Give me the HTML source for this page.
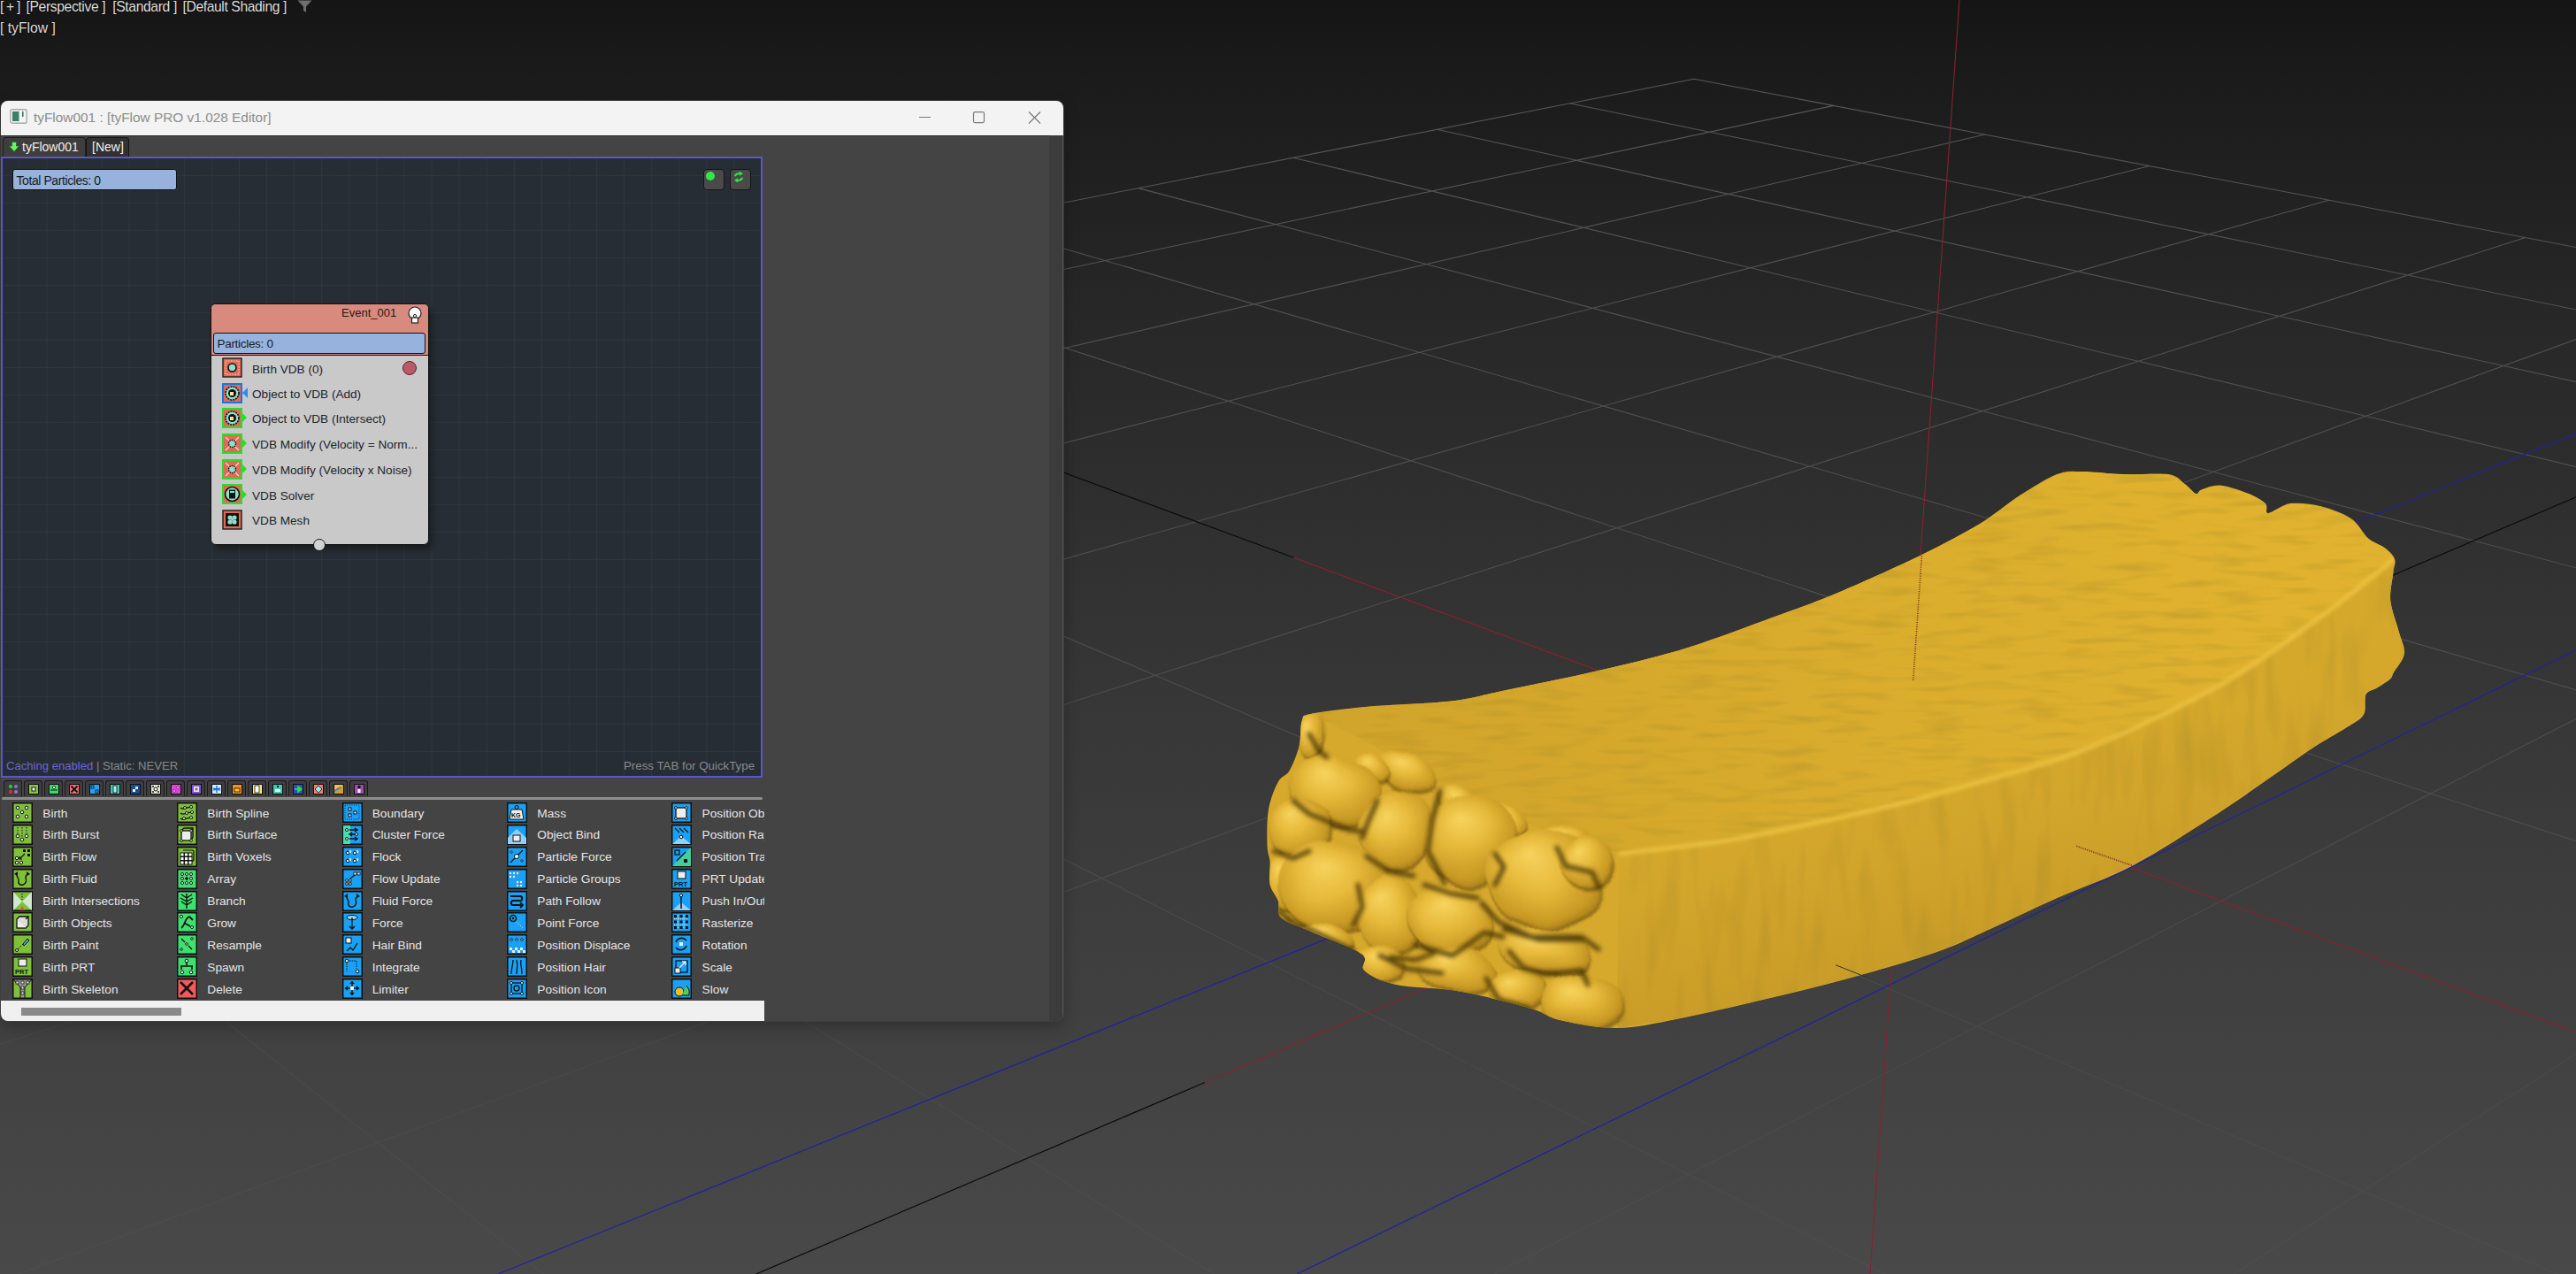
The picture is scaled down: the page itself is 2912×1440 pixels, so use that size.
<!DOCTYPE html><html><head><meta charset="utf-8"><style>
html,body{margin:0;padding:0;width:2912px;height:1440px;overflow:hidden;background:#222;font-family:"Liberation Sans", sans-serif;}
.abs{position:absolute}
.vl{position:absolute;left:0;color:#dcdcdc;font-size:15.7px;white-space:pre;line-height:1;text-shadow:0 0 2px #000}
.win{position:absolute;left:1px;top:114px;width:1201px;height:1040px;background:#444;border-radius:8px;overflow:hidden;box-shadow:0 0 0 1px rgba(70,70,70,0.6), 0 6px 18px rgba(0,0,0,0.28)}
.title{position:absolute;left:0;top:0;width:1201px;height:39px;background:#f3f3f3}
.ttext{position:absolute;left:37px;top:11px;font-size:15.4px;color:#8d8d8d;white-space:pre;line-height:1}
.tabrow{position:absolute;left:0;top:39px;width:1185px;height:25px;background:#444;border-top:1.5px solid #262626;box-sizing:border-box}
.tab{position:absolute;top:1px;height:23px;background:#3e3e3e;border:1px solid #1c1c1c;border-bottom:none;border-radius:4px 4px 0 0;box-sizing:border-box;color:#f2efe6;font-size:14px;line-height:20px;white-space:pre}
.canvas{position:absolute;left:0px;top:63px;width:861px;height:702px;box-sizing:border-box;border:2.5px solid #5b56c9;background-color:#272d34;
background-image:linear-gradient(90deg, rgba(55,78,82,0.3) 1px, transparent 1px),linear-gradient(0deg, rgba(55,78,82,0.3) 1px, transparent 1px);
background-size:31.08px 31px;background-position:18.4px 19.9px}
.pbar{position:absolute;background:#97b3dd;border:1.5px solid #0e1116;border-radius:3px;box-sizing:border-box;color:#151a24;white-space:pre;line-height:1}
.node{position:absolute}
.row{position:absolute;left:0;height:28px;font-size:13.5px;color:#20242a;white-space:pre;line-height:1}
.ops{position:absolute;left:0;top:790px;width:863px}
.op{position:absolute;font-size:13.7px;color:#e6e6e6;white-space:pre;line-height:1}
.ico{position:absolute;width:22px;height:22px}

</style></head><body>
<svg width="2912" height="1440" viewBox="0 0 2912 1440" style="position:absolute;left:0;top:0"><defs><linearGradient id="bg" x1="0" y1="0" x2="0" y2="1"><stop offset="0" stop-color="#151515"/><stop offset="0.0625" stop-color="#1b1b1b"/><stop offset="0.24" stop-color="#272727"/><stop offset="0.576" stop-color="#383838"/><stop offset="0.833" stop-color="#424242"/><stop offset="1" stop-color="#494949"/></linearGradient><linearGradient id="gl" gradientUnits="userSpaceOnUse" x1="0" y1="80" x2="0" y2="1440"><stop offset="0" stop-color="#585858"/><stop offset="0.2" stop-color="#505050"/><stop offset="0.55" stop-color="#4d4d4d"/><stop offset="0.83" stop-color="#484848"/><stop offset="1" stop-color="#4d4d4d"/></linearGradient></defs><rect width="2912" height="1440" fill="url(#bg)"/><path d="M1915.0 89.3L-1769.2 812.7M1915.0 89.3L6515.2 967.1M2072.9 119.4L-1747.5 932.1M1774.8 116.8L6572.4 1100.6M2244.0 152.0L-1722.0 1072.5M1624.3 146.3L6639.6 1257.6M2429.9 187.5L-1691.6 1239.9M1462.0 178.2L6720.0 1445.1M2632.7 226.2L-1654.6 1443.0M1286.7 212.6L6817.5 1672.8M2854.8 268.6L-1608.9 1694.5M1096.6 250.0L6938.6 1955.3M3099.1 315.2L-1550.7 2014.3M889.9 290.6L7092.7 2315.1M3668.9 424.0L-1369.6 3010.5M416.8 383.5L7575.1 3441.0M4004.0 487.9L-1217.0 3849.8M144.5 436.9L7984.0 4395.5M4380.9 559.8L-974.0 5185.8M-156.9 496.1L8639.8 5926.3M4808.0 641.3L-526.9 7645.0M-492.0 561.9L9862.6 8780.6M5295.9 734.5L568.7 13670.1M-867.1 635.6L12948.1 15982.5M5858.8 841.9L7442.0 51469.3M-1289.6 718.5L35746.5 69197.7M6515.2 967.1L-7829.6 -32516.0M-1769.2 812.7L-7829.6 -32516.0" stroke="url(#gl)" stroke-width="1.1" fill="none"/><path d="M664.2 334.9L1462.5 630.3" stroke="#0a0a0a" stroke-width="1.2"/><path d="M1462.5 630.3L7295.7 2788.9" stroke="#8a2030" stroke-width="1.2"/><path d="M3369.0 366.7L2000.0 951.2" stroke="#0a0a0a" stroke-width="1.2"/><path d="M2000.0 951.2L1362.0 1223.5" stroke="#8a2030" stroke-width="1.2"/><path d="M1362.0 1223.5L-1474.4 2434.3" stroke="#0a0a0a" stroke-width="1.2"/><path d="M562.9 1440L2912 490" stroke="#23239a" stroke-width="1.3"/><path d="M1466 1440L2912 735" stroke="#23239a" stroke-width="1.3"/><path d="M2215 0L2114 1440" stroke="#8a2030" stroke-width="1.1"/></svg>
<div class="vl" style="top:0px;left:0px;letter-spacing:-0.8px">[ + ]</div>
<div class="vl" style="top:0px;left:29.5px;letter-spacing:-0.38px">[Perspective ]</div>
<div class="vl" style="top:0px;left:127.3px;letter-spacing:-0.38px">[Standard ]</div>
<div class="vl" style="top:0px;left:206.5px;letter-spacing:-0.4px">[Default Shading ]</div>
<div class="vl" style="top:24px">[ tyFlow ]</div>
<svg class="abs" style="left:336px;top:0px" width="17" height="15" viewBox="0 0 17 15"><path d="M0.5 0.5H16.5L10 7.5V14L7 12V7.5Z" fill="#6e6e6e"/></svg>
<svg width="2912" height="1440" viewBox="0 0 2912 1440" style="position:absolute;left:0;top:0"><defs>
<linearGradient id="topg" gradientUnits="userSpaceOnUse" x1="1550" y1="880" x2="2550" y2="580"><stop offset="0" stop-color="#d1a42b"/><stop offset="0.5" stop-color="#d9ac2d"/><stop offset="1" stop-color="#e0b22f"/></linearGradient>
<linearGradient id="sideg" gradientUnits="userSpaceOnUse" x1="2000" y1="930" x2="2050" y2="1130"><stop offset="0" stop-color="#d5a82c"/><stop offset="1" stop-color="#c99c28"/></linearGradient>
<filter id="blur2"><feGaussianBlur stdDeviation="2"/></filter>
<filter id="blur5"><feGaussianBlur stdDeviation="5"/></filter>
<clipPath id="silclip"><path d="M1482.8 806.7C1495.1 804.1 1519.4 801.1 1545.6 798.8C1571.8 796.4 1613.6 795.7 1639.8 792.6C1666.0 789.5 1675.9 785.5 1702.6 780.0C1729.3 774.5 1767.5 767.1 1800.0 759.6C1832.5 752.1 1865.0 745.0 1897.4 735.3C1929.9 725.6 1965.5 711.8 1994.7 701.2C2023.9 690.7 2043.4 684.2 2072.6 672.0C2101.8 659.8 2142.4 641.5 2170.0 628.2C2197.6 614.9 2219.4 603.2 2238.0 592.0C2256.6 580.8 2266.8 570.5 2281.4 561.2C2296.0 551.9 2313.4 540.8 2325.4 536.1C2337.4 531.4 2341.0 533.0 2353.6 533.0C2366.2 533.0 2384.6 535.6 2400.8 536.1C2417.0 536.6 2439.5 534.3 2451.0 536.1C2462.5 537.9 2464.6 543.4 2469.8 547.1C2475.0 550.8 2479.2 557.1 2482.4 558.1C2485.6 559.1 2484.0 555.0 2488.7 553.4C2493.4 551.8 2501.8 547.9 2510.7 548.7C2519.6 549.5 2533.7 554.7 2542.1 558.1C2550.5 561.5 2557.2 565.4 2560.9 569.1C2564.6 572.8 2559.4 580.1 2564.1 580.1C2568.8 580.1 2579.3 570.4 2589.2 569.1C2599.1 567.8 2612.2 569.3 2623.7 572.2C2635.2 575.1 2649.4 580.4 2658.3 586.4C2667.2 592.4 2670.8 602.9 2677.1 608.4C2683.4 613.9 2691.0 615.4 2696.0 619.3C2701.0 623.2 2705.4 627.2 2707.0 631.9C2708.6 636.6 2706.2 639.8 2705.4 647.6C2704.6 655.5 2701.2 668.0 2702.3 679.0C2703.4 690.0 2709.1 703.6 2711.7 713.6C2714.3 723.6 2718.9 731.0 2718.0 738.7C2717.1 746.4 2708.7 755.2 2706.0 760.0C2703.3 764.8 2705.2 764.6 2702.0 767.5C2698.8 770.4 2691.6 774.7 2687.0 777.6C2682.4 780.5 2677.0 780.1 2674.5 785.1C2672.0 790.1 2675.8 801.4 2672.0 807.7C2668.2 814.0 2661.5 816.5 2651.9 822.8C2642.3 829.1 2628.8 835.8 2614.2 845.4C2599.5 855.0 2582.8 867.6 2564.0 880.6C2545.2 893.6 2526.7 907.0 2501.2 923.3C2475.7 939.6 2440.1 963.2 2410.8 978.5C2381.5 993.8 2352.2 1003.1 2325.4 1015.0C2298.6 1026.9 2272.7 1039.8 2250.0 1050.0C2227.3 1060.2 2215.8 1066.8 2189.5 1076.0C2163.2 1085.2 2124.5 1096.4 2092.0 1105.3C2059.5 1114.2 2027.1 1121.9 1994.7 1129.6C1962.3 1137.3 1925.2 1146.1 1897.4 1151.5C1869.7 1156.9 1850.2 1161.7 1828.2 1162.0C1806.2 1162.3 1781.1 1157.1 1765.4 1153.6C1749.7 1150.1 1747.1 1145.2 1734.0 1141.0C1720.9 1136.8 1702.6 1132.2 1686.9 1128.5C1671.2 1124.8 1658.1 1121.7 1639.8 1119.1C1621.5 1116.5 1593.2 1116.5 1577.0 1112.8C1560.8 1109.1 1548.7 1102.8 1542.4 1097.0C1536.1 1091.2 1549.2 1085.6 1539.3 1078.3C1529.4 1071.0 1498.0 1060.0 1482.8 1053.2C1467.6 1046.4 1454.6 1043.3 1448.3 1037.5C1442.0 1031.7 1447.1 1024.9 1445.0 1018.6C1442.9 1012.3 1437.2 1007.1 1435.7 999.8C1434.2 992.5 1436.2 982.0 1435.7 974.7C1435.2 967.4 1432.9 965.8 1432.6 955.8C1432.3 945.8 1431.9 927.0 1434.0 915.0C1436.1 903.0 1441.0 890.9 1445.0 883.6C1449.0 876.3 1453.8 877.8 1457.7 871.0C1461.7 864.2 1466.4 852.2 1468.7 842.8C1471.0 833.4 1469.5 820.5 1471.8 814.5C1474.1 808.5 1470.5 809.3 1482.8 806.7Z"/></clipPath>
</defs><path d="M1482.8 806.7C1495.1 804.1 1519.4 801.1 1545.6 798.8C1571.8 796.4 1613.6 795.7 1639.8 792.6C1666.0 789.5 1675.9 785.5 1702.6 780.0C1729.3 774.5 1767.5 767.1 1800.0 759.6C1832.5 752.1 1865.0 745.0 1897.4 735.3C1929.9 725.6 1965.5 711.8 1994.7 701.2C2023.9 690.7 2043.4 684.2 2072.6 672.0C2101.8 659.8 2142.4 641.5 2170.0 628.2C2197.6 614.9 2219.4 603.2 2238.0 592.0C2256.6 580.8 2266.8 570.5 2281.4 561.2C2296.0 551.9 2313.4 540.8 2325.4 536.1C2337.4 531.4 2341.0 533.0 2353.6 533.0C2366.2 533.0 2384.6 535.6 2400.8 536.1C2417.0 536.6 2439.5 534.3 2451.0 536.1C2462.5 537.9 2464.6 543.4 2469.8 547.1C2475.0 550.8 2479.2 557.1 2482.4 558.1C2485.6 559.1 2484.0 555.0 2488.7 553.4C2493.4 551.8 2501.8 547.9 2510.7 548.7C2519.6 549.5 2533.7 554.7 2542.1 558.1C2550.5 561.5 2557.2 565.4 2560.9 569.1C2564.6 572.8 2559.4 580.1 2564.1 580.1C2568.8 580.1 2579.3 570.4 2589.2 569.1C2599.1 567.8 2612.2 569.3 2623.7 572.2C2635.2 575.1 2649.4 580.4 2658.3 586.4C2667.2 592.4 2670.8 602.9 2677.1 608.4C2683.4 613.9 2691.0 615.4 2696.0 619.3C2701.0 623.2 2705.4 627.2 2707.0 631.9C2708.6 636.6 2706.2 639.8 2705.4 647.6C2704.6 655.5 2701.2 668.0 2702.3 679.0C2703.4 690.0 2709.1 703.6 2711.7 713.6C2714.3 723.6 2718.9 731.0 2718.0 738.7C2717.1 746.4 2708.7 755.2 2706.0 760.0C2703.3 764.8 2705.2 764.6 2702.0 767.5C2698.8 770.4 2691.6 774.7 2687.0 777.6C2682.4 780.5 2677.0 780.1 2674.5 785.1C2672.0 790.1 2675.8 801.4 2672.0 807.7C2668.2 814.0 2661.5 816.5 2651.9 822.8C2642.3 829.1 2628.8 835.8 2614.2 845.4C2599.5 855.0 2582.8 867.6 2564.0 880.6C2545.2 893.6 2526.7 907.0 2501.2 923.3C2475.7 939.6 2440.1 963.2 2410.8 978.5C2381.5 993.8 2352.2 1003.1 2325.4 1015.0C2298.6 1026.9 2272.7 1039.8 2250.0 1050.0C2227.3 1060.2 2215.8 1066.8 2189.5 1076.0C2163.2 1085.2 2124.5 1096.4 2092.0 1105.3C2059.5 1114.2 2027.1 1121.9 1994.7 1129.6C1962.3 1137.3 1925.2 1146.1 1897.4 1151.5C1869.7 1156.9 1850.2 1161.7 1828.2 1162.0C1806.2 1162.3 1781.1 1157.1 1765.4 1153.6C1749.7 1150.1 1747.1 1145.2 1734.0 1141.0C1720.9 1136.8 1702.6 1132.2 1686.9 1128.5C1671.2 1124.8 1658.1 1121.7 1639.8 1119.1C1621.5 1116.5 1593.2 1116.5 1577.0 1112.8C1560.8 1109.1 1548.7 1102.8 1542.4 1097.0C1536.1 1091.2 1549.2 1085.6 1539.3 1078.3C1529.4 1071.0 1498.0 1060.0 1482.8 1053.2C1467.6 1046.4 1454.6 1043.3 1448.3 1037.5C1442.0 1031.7 1447.1 1024.9 1445.0 1018.6C1442.9 1012.3 1437.2 1007.1 1435.7 999.8C1434.2 992.5 1436.2 982.0 1435.7 974.7C1435.2 967.4 1432.9 965.8 1432.6 955.8C1432.3 945.8 1431.9 927.0 1434.0 915.0C1436.1 903.0 1441.0 890.9 1445.0 883.6C1449.0 876.3 1453.8 877.8 1457.7 871.0C1461.7 864.2 1466.4 852.2 1468.7 842.8C1471.0 833.4 1469.5 820.5 1471.8 814.5C1474.1 808.5 1470.5 809.3 1482.8 806.7Z" fill="#d6a82c"/><g clip-path="url(#silclip)"><path d="M1482.8 806.7L1545.6 798.8L1639.8 792.6L1702.6 780.0L1800.0 759.6L1897.4 735.3L1994.7 701.2L2072.6 672.0L2170.0 628.2L2238.0 592.0L2281.4 561.2L2325.4 536.1L2353.6 533.0L2400.8 536.1L2451.0 536.1L2469.8 547.1L2482.4 558.1L2488.7 553.4L2510.7 548.7L2542.1 558.1L2560.9 569.1L2564.1 580.1L2589.2 569.1L2623.7 572.2L2658.3 586.4L2677.1 608.4L2696.0 619.3L2707.0 631.9L2707.0 632.0L2627.0 694.7L2532.7 760.7L2438.4 811.0L2344.2 852.0L2238.2 884.0L2140.8 910.0L2043.4 932.0L1946.0 951.0L1830.0 965.0L1806.0 955.0L1773.0 946.0L1734.0 933.8L1639.8 896.2L1561.3 847.5Z" fill="url(#topg)"/><path d="M2707.0 632.0L2705.4 647.6L2702.3 679.0L2711.7 713.6L2718.0 738.7L2706.0 760.0L2702.0 767.5L2687.0 777.6L2674.5 785.1L2672.0 807.7L2651.9 822.8L2614.2 845.4L2564.0 880.6L2501.2 923.3L2410.8 978.5L2325.4 1015.0L2250.0 1050.0L2189.5 1076.0L2092.0 1105.3L1994.7 1129.6L1897.4 1151.5L1828.2 1162.0L1828.0 1162.0L1830.0 965.0L1946.0 951.0L2043.4 932.0L2140.8 910.0L2238.2 884.0L2344.2 852.0L2438.4 811.0L2532.7 760.7L2627.0 694.7L2707.0 632.0Z" fill="url(#sideg)"/><filter id="tex" x="1400" y="500" width="1350" height="700" filterUnits="userSpaceOnUse"><feTurbulence type="fractalNoise" baseFrequency="0.018 0.11" numOctaves="2" seed="7" result="n"/><feColorMatrix in="n" type="matrix" values="0 0 0 0 0.35  0 0 0 0 0.25  0 0 0 0 0.02  0 0 0 -2.5 1.3" result="c"/><feComposite in="c" in2="SourceAlpha" operator="in"/></filter><path d="M1482.8 806.7L1545.6 798.8L1639.8 792.6L1702.6 780.0L1800.0 759.6L1897.4 735.3L1994.7 701.2L2072.6 672.0L2170.0 628.2L2238.0 592.0L2281.4 561.2L2325.4 536.1L2353.6 533.0L2400.8 536.1L2451.0 536.1L2469.8 547.1L2482.4 558.1L2488.7 553.4L2510.7 548.7L2542.1 558.1L2560.9 569.1L2564.1 580.1L2589.2 569.1L2623.7 572.2L2658.3 586.4L2677.1 608.4L2696.0 619.3L2707.0 631.9L2707.0 632.0L2627.0 694.7L2532.7 760.7L2438.4 811.0L2344.2 852.0L2238.2 884.0L2140.8 910.0L2043.4 932.0L1946.0 951.0L1830.0 965.0L1806.0 955.0L1773.0 946.0L1734.0 933.8L1639.8 896.2L1561.3 847.5Z" fill="#000" filter="url(#tex)" opacity="0.3"/><filter id="tex2" x="1400" y="500" width="1350" height="700" filterUnits="userSpaceOnUse"><feTurbulence type="fractalNoise" baseFrequency="0.05 0.01" numOctaves="2" seed="3" result="n"/><feColorMatrix in="n" type="matrix" values="0 0 0 0 0.35  0 0 0 0 0.25  0 0 0 0 0.02  0 0 0 -2.5 1.3" result="c"/><feComposite in="c" in2="SourceAlpha" operator="in"/></filter><path d="M2707.0 632.0L2705.4 647.6L2702.3 679.0L2711.7 713.6L2718.0 738.7L2706.0 760.0L2702.0 767.5L2687.0 777.6L2674.5 785.1L2672.0 807.7L2651.9 822.8L2614.2 845.4L2564.0 880.6L2501.2 923.3L2410.8 978.5L2325.4 1015.0L2250.0 1050.0L2189.5 1076.0L2092.0 1105.3L1994.7 1129.6L1897.4 1151.5L1828.2 1162.0L1828.0 1162.0L1830.0 965.0L1946.0 951.0L2043.4 932.0L2140.8 910.0L2238.2 884.0L2344.2 852.0L2438.4 811.0L2532.7 760.7L2627.0 694.7L2707.0 632.0Z" fill="#000" filter="url(#tex2)" opacity="0.3"/><path d="M2707.0 632.0C2693.7 642.5 2656.1 673.2 2627.0 694.7C2597.9 716.2 2564.1 741.3 2532.7 760.7C2501.3 780.1 2469.8 795.8 2438.4 811.0C2407.0 826.2 2377.6 839.8 2344.2 852.0C2310.8 864.2 2272.1 874.3 2238.2 884.0C2204.3 893.7 2173.3 902.0 2140.8 910.0C2108.3 918.0 2075.9 925.2 2043.4 932.0C2010.9 938.8 1981.6 945.5 1946.0 951.0C1910.4 956.5 1849.3 962.7 1830.0 965.0" stroke="#f0c443" stroke-width="4" fill="none" filter="url(#blur2)"/><defs><radialGradient id="lg" cx="0.45" cy="0.45" r="0.6" fx="0.35" fy="0.3"><stop offset="0" stop-color="#f7d45e"/><stop offset="0.45" stop-color="#e6b93a"/><stop offset="0.85" stop-color="#c89a24"/><stop offset="1" stop-color="#a27818"/></radialGradient><filter id="cb" x="-20%" y="-20%" width="140%" height="140%"><feGaussianBlur stdDeviation="1.5"/></filter><filter id="cb2" x="-20%" y="-20%" width="140%" height="140%"><feGaussianBlur stdDeviation="2.5"/></filter><filter id="lb" x="-20%" y="-20%" width="140%" height="140%"><feGaussianBlur stdDeviation="1.2"/></filter></defs><filter id="disp" x="1380" y="760" width="520" height="440" filterUnits="userSpaceOnUse" color-interpolation-filters="sRGB"><feTurbulence type="fractalNoise" baseFrequency="0.022" numOctaves="1" seed="11" result="t"/><feDisplacementMap in="SourceGraphic" in2="t" scale="16" xChannelSelector="R" yChannelSelector="G"/></filter><g filter="url(#disp)"><ellipse cx="1484" cy="834" rx="14" ry="26" transform="rotate(10 1482 830)" fill="#5c420a" opacity="0.55" filter="url(#cb)"/><ellipse cx="1482" cy="830" rx="14" ry="26" transform="rotate(10 1482 830)" fill="url(#lg)" filter="url(#lb)"/><ellipse cx="1592" cy="876" rx="34" ry="22" transform="rotate(25 1590 872)" fill="#5c420a" opacity="0.55" filter="url(#cb)"/><ellipse cx="1590" cy="872" rx="34" ry="22" transform="rotate(25 1590 872)" fill="url(#lg)" filter="url(#lb)"/><ellipse cx="1552" cy="872" rx="22" ry="16" transform="rotate(20 1550 868)" fill="#5c420a" opacity="0.55" filter="url(#cb)"/><ellipse cx="1550" cy="868" rx="22" ry="16" transform="rotate(20 1550 868)" fill="url(#lg)" filter="url(#lb)"/><ellipse cx="1652" cy="909" rx="28" ry="18" transform="rotate(20 1650 905)" fill="#5c420a" opacity="0.55" filter="url(#cb)"/><ellipse cx="1650" cy="905" rx="28" ry="18" transform="rotate(20 1650 905)" fill="url(#lg)" filter="url(#lb)"/><ellipse cx="1702" cy="929" rx="24" ry="16" transform="rotate(20 1700 925)" fill="#5c420a" opacity="0.55" filter="url(#cb)"/><ellipse cx="1700" cy="925" rx="24" ry="16" transform="rotate(20 1700 925)" fill="url(#lg)" filter="url(#lb)"/><ellipse cx="1772" cy="954" rx="30" ry="16" transform="rotate(15 1770 950)" fill="#5c420a" opacity="0.55" filter="url(#cb)"/><ellipse cx="1770" cy="950" rx="30" ry="16" transform="rotate(15 1770 950)" fill="url(#lg)" filter="url(#lb)"/><ellipse cx="1510" cy="897" rx="52" ry="40" transform="rotate(15 1508 893)" fill="#5c420a" opacity="0.55" filter="url(#cb)"/><ellipse cx="1508" cy="893" rx="52" ry="40" transform="rotate(15 1508 893)" fill="url(#lg)" filter="url(#lb)"/><ellipse cx="1472" cy="939" rx="36" ry="34" transform="rotate(0 1470 935)" fill="#5c420a" opacity="0.55" filter="url(#cb)"/><ellipse cx="1470" cy="935" rx="36" ry="34" transform="rotate(0 1470 935)" fill="url(#lg)" filter="url(#lb)"/><ellipse cx="1579" cy="944" rx="40" ry="45" transform="rotate(10 1577 940)" fill="#5c420a" opacity="0.55" filter="url(#cb)"/><ellipse cx="1577" cy="940" rx="40" ry="45" transform="rotate(10 1577 940)" fill="url(#lg)" filter="url(#lb)"/><ellipse cx="1664" cy="952" rx="50" ry="52" transform="rotate(10 1662 948)" fill="#5c420a" opacity="0.55" filter="url(#cb)"/><ellipse cx="1662" cy="948" rx="50" ry="52" transform="rotate(10 1662 948)" fill="url(#lg)" filter="url(#lb)"/><ellipse cx="1747" cy="996" rx="65" ry="55" transform="rotate(12 1745 992)" fill="#5c420a" opacity="0.55" filter="url(#cb)"/><ellipse cx="1745" cy="992" rx="65" ry="55" transform="rotate(12 1745 992)" fill="url(#lg)" filter="url(#lb)"/><ellipse cx="1797" cy="979" rx="30" ry="28" transform="rotate(0 1795 975)" fill="#5c420a" opacity="0.55" filter="url(#cb)"/><ellipse cx="1795" cy="975" rx="30" ry="28" transform="rotate(0 1795 975)" fill="url(#lg)" filter="url(#lb)"/><ellipse cx="1454" cy="999" rx="20" ry="30" transform="rotate(0 1452 995)" fill="#5c420a" opacity="0.55" filter="url(#cb)"/><ellipse cx="1452" cy="995" rx="20" ry="30" transform="rotate(0 1452 995)" fill="url(#lg)" filter="url(#lb)"/><ellipse cx="1510" cy="1006" rx="62" ry="50" transform="rotate(10 1508 1002)" fill="#5c420a" opacity="0.55" filter="url(#cb)"/><ellipse cx="1508" cy="1002" rx="62" ry="50" transform="rotate(10 1508 1002)" fill="url(#lg)" filter="url(#lb)"/><ellipse cx="1574" cy="1039" rx="36" ry="45" transform="rotate(0 1572 1035)" fill="#5c420a" opacity="0.55" filter="url(#cb)"/><ellipse cx="1572" cy="1035" rx="36" ry="45" transform="rotate(0 1572 1035)" fill="url(#lg)" filter="url(#lb)"/><ellipse cx="1642" cy="1044" rx="50" ry="38" transform="rotate(15 1640 1040)" fill="#5c420a" opacity="0.55" filter="url(#cb)"/><ellipse cx="1640" cy="1040" rx="50" ry="38" transform="rotate(15 1640 1040)" fill="url(#lg)" filter="url(#lb)"/><ellipse cx="1750" cy="1079" rx="52" ry="26" transform="rotate(10 1748 1075)" fill="#5c420a" opacity="0.55" filter="url(#cb)"/><ellipse cx="1748" cy="1075" rx="52" ry="26" transform="rotate(10 1748 1075)" fill="url(#lg)" filter="url(#lb)"/><ellipse cx="1647" cy="1099" rx="45" ry="25" transform="rotate(10 1645 1095)" fill="#5c420a" opacity="0.55" filter="url(#cb)"/><ellipse cx="1645" cy="1095" rx="45" ry="25" transform="rotate(10 1645 1095)" fill="url(#lg)" filter="url(#lb)"/><ellipse cx="1714" cy="1122" rx="32" ry="24" transform="rotate(0 1712 1118)" fill="#5c420a" opacity="0.55" filter="url(#cb)"/><ellipse cx="1712" cy="1118" rx="32" ry="24" transform="rotate(0 1712 1118)" fill="url(#lg)" filter="url(#lb)"/><ellipse cx="1790" cy="1136" rx="48" ry="30" transform="rotate(5 1788 1132)" fill="#5c420a" opacity="0.55" filter="url(#cb)"/><ellipse cx="1788" cy="1132" rx="48" ry="30" transform="rotate(5 1788 1132)" fill="url(#lg)" filter="url(#lb)"/><ellipse cx="1502" cy="1062" rx="32" ry="14" transform="rotate(15 1500 1058)" fill="#5c420a" opacity="0.55" filter="url(#cb)"/><ellipse cx="1500" cy="1058" rx="32" ry="14" transform="rotate(15 1500 1058)" fill="url(#lg)" filter="url(#lb)"/><ellipse cx="1562" cy="1094" rx="28" ry="18" transform="rotate(10 1560 1090)" fill="#5c420a" opacity="0.55" filter="url(#cb)"/><ellipse cx="1560" cy="1090" rx="28" ry="18" transform="rotate(10 1560 1090)" fill="url(#lg)" filter="url(#lb)"/></g><path d="M1462 905L1480 920L1525 938L1542 940M1540 947L1547 928L1557 905M1545 968L1570 985L1598 990M1628 894L1619 927L1614 962L1633 998M1675 1021L1694 1042L1732 1059L1788 1059L1807 1073M1600 1068L1642 1080L1678 1054L1699 1059M1706 1075L1722 1094L1746 1101L1788 1097L1795 1113M1680 1106L1694 1130L1727 1139M1760 958L1770 979L1800 986L1807 1002M1455 1040L1490 1055L1530 1075M1440 962L1462 970L1480 962M1572 1082L1600 1085L1620 1078M1535 1000L1540 1025L1530 1045M1690 965L1700 980L1690 1000M1480 830L1492 850L1500 856M1700 1050L1740 1062L1790 1062M1610 1000L1640 1010L1670 1015M1560 1080L1590 1095L1630 1100M1445 1030L1470 1048" stroke="#2e2004" stroke-width="5" fill="none" stroke-linejoin="round" stroke-linecap="round" filter="url(#cb2)" opacity="0.75"/></g><path d="M2172.4 628.2L2162.7 769.4" stroke="#7a2a20" stroke-width="1.6" stroke-dasharray="1 1.5"/><path d="M2347.4 956.4L2410.8 978.5" stroke="#7a2a20" stroke-width="1.8" stroke-dasharray="1 1.5"/><path d="M2075 1090.7L2111.6 1105.3" stroke="#333" stroke-width="1"/></svg>
<div class="win">
<div class="title">
<svg class="abs" style="left:10px;top:9px" width="20" height="17" viewBox="0 0 20 17"><rect x="0.75" y="0.75" width="18.5" height="15.5" rx="2" fill="#f0f4f2" stroke="#a9a9a9" stroke-width="1.3"/><rect x="3" y="3" width="7.5" height="11" fill="#3a7f6a"/><rect x="14" y="3" width="1.5" height="6" fill="#2d6d5d"/></svg>
<div class="ttext">tyFlow001 : [tyFlow PRO v1.028 Editor]</div>
<svg class="abs" style="left:1037px;top:12px" width="142" height="14" viewBox="0 0 142 14"><path d="M1 6.5H14" stroke="#7a7a7a" stroke-width="1.2"/><rect x="62.5" y="0.6" width="12" height="12" rx="1.5" fill="none" stroke="#7a7a7a" stroke-width="1.2"/><path d="M125 0.5L138 13.5M138 0.5L125 13.5" stroke="#7a7a7a" stroke-width="1.2"/></svg>
</div>
<div class="tabrow">
<div class="tab" style="left:2px;width:94px;"><svg class="abs" style="left:6px;top:4px" width="12" height="12" viewBox="0 0 12 12"><path d="M3.5 0.5H8.5V5H11.5L6 11.5L0.5 5H3.5Z" fill="#6bf06b" stroke="#1f6a1f" stroke-width="0.8"/></svg><span style="position:absolute;left:21px;top:0px">tyFlow001</span></div>
<div class="tab" style="left:96px;width:49px;background:#313131;border-color:#141414"><span style="position:absolute;left:6px;top:0px">[New]</span></div>
</div>
<div class="canvas"></div><div class="pbar" style="left:12.5px;top:76.5px;width:186px;height:24px;font-size:14px;letter-spacing:-0.42px;padding:5px 0 0 4px">Total Particles: 0</div><div class="abs" style="left:793.5px;top:76.5px;width:24px;height:24px;background:#4a4a4a;border:1px solid #151515;border-radius:4px;box-sizing:border-box"><div class="abs" style="left:2.5px;top:2.5px;width:10px;height:10px;border-radius:5px;background:#2fe84a"></div></div><div class="abs" style="left:823.5px;top:76.5px;width:24px;height:24px;background:#4a4a4a;border:1px solid #151515;border-radius:4px;box-sizing:border-box"><svg class="abs" style="left:2px;top:1px" width="14" height="14" viewBox="0 0 14 14"><path d="M2 6C2.5 3 5 1.8 8 2.3L7.6 0.5L12 3.2L8 5.8L8.2 4.2C6 3.9 4.5 4.6 4 6.4Z M12 8C11.5 11 9 12.2 6 11.7L6.4 13.5L2 10.8L6 8.2L5.8 9.8C8 10.1 9.5 9.4 10 7.6Z" fill="#2fe84a"/></svg></div><div class="abs" style="left:241px;top:233.60000000000002px;width:247px;height:273px;background:rgba(0,0,0,0.35);border-radius:6px;filter:blur(3px)"></div><div class="abs" style="left:237px;top:228.60000000000002px;width:247px;height:273px;background:#c9c9c9;border:1.5px solid #101010;border-radius:6px;box-sizing:border-box;overflow:hidden"><div class="abs" style="left:0;top:0;width:100%;height:57.39999999999998px;background:#d98a7e;border-bottom:1.5px solid #101010"></div><div class="abs" style="left:147.0px;top:3.8999999999999773px;font-size:13px;color:#1b1b1b;line-height:1;white-space:pre">Event_001</div><svg class="abs" style="left:221.0px;top:2.8999999999999773px" width="18" height="22" viewBox="0 0 18 22"><circle cx="9" cy="8" r="7" fill="#fafafa" stroke="#222" stroke-width="1.2"/><rect x="5.5" y="13" width="7" height="6" fill="#fafafa" stroke="#222" stroke-width="1.2"/><circle cx="9" cy="11" r="1.6" fill="none" stroke="#222" stroke-width="1"/></svg><div class="pbar" style="left:1.5px;top:32.39999999999998px;width:240px;height:24px;font-size:13.5px;letter-spacing:-0.3px;padding:5px 0 0 4px">Particles: 0</div></div><div class="abs" style="left:250px;top:290.2px"><svg width="23" height="23" viewBox="0 0 23 23"><rect x="1" y="1" width="21" height="21" fill="#e06a58" stroke="#151515" stroke-width="1.3"/><rect x="4" y="4" width="15" height="15" fill="none" stroke="#f8d8d0" stroke-width="1" stroke-dasharray="1.5 1.5"/><circle cx="11.5" cy="11.5" r="4.5" fill="#8fe0c8" stroke="#111" stroke-width="1.6"/></svg></div><div class="abs" style="left:284px;top:296.7px;font-size:13.6px;color:#20242c;line-height:1;white-space:pre">Birth VDB (0)</div><div class="abs" style="left:250px;top:318.8px"><svg width="23" height="23" viewBox="0 0 23 23"><rect x="1" y="1" width="21" height="21" fill="#e06a58" stroke="#1577e0" stroke-width="2"/><circle cx="11.5" cy="11.5" r="7.5" fill="#8fe0c8" stroke="#111" stroke-width="1.6" stroke-dasharray="2 1"/><circle cx="11.5" cy="11.5" r="4.5" fill="#111"/><rect x="9" y="10" width="4" height="4" fill="#f0e8a0"/></svg></div><svg class="abs" style="left:273px;top:324.3px" width="7" height="12" viewBox="0 0 7 12"><path d="M6 0L0 6L6 12Z" fill="#2a8cf0"/></svg><div class="abs" style="left:284px;top:325.3px;font-size:13.6px;color:#20242c;line-height:1;white-space:pre">Object to VDB (Add)</div><div class="abs" style="left:250px;top:346.9px"><svg width="23" height="23" viewBox="0 0 23 23"><rect x="1" y="1" width="21" height="21" fill="#e06a58" stroke="#25e02a" stroke-width="2"/><circle cx="11.5" cy="11.5" r="7.5" fill="#8fe0c8" stroke="#111" stroke-width="1.6" stroke-dasharray="2 1"/><circle cx="11.5" cy="11.5" r="4.5" fill="#111"/><rect x="9" y="10" width="4" height="4" fill="#f0e8a0"/></svg></div><svg class="abs" style="left:272px;top:352.4px" width="7" height="12" viewBox="0 0 7 12"><path d="M0 0L6 6L0 12Z" fill="#25e02a"/></svg><div class="abs" style="left:284px;top:353.4px;font-size:13.6px;color:#20242c;line-height:1;white-space:pre">Object to VDB (Intersect)</div><div class="abs" style="left:250px;top:375.9px"><svg width="23" height="23" viewBox="0 0 23 23"><rect x="1" y="1" width="21" height="21" fill="#e06a58" stroke="#25e02a" stroke-width="2"/><path d="M4 4L8 8M19 4L15 8M4 19L8 15M19 19L15 15" stroke="#f8d8d0" stroke-width="1.2"/><circle cx="11.5" cy="11.5" r="4" fill="#8fe0c8" stroke="#111" stroke-width="1.4" stroke-dasharray="1.5 1"/></svg></div><svg class="abs" style="left:272px;top:381.4px" width="7" height="12" viewBox="0 0 7 12"><path d="M0 0L6 6L0 12Z" fill="#25e02a"/></svg><div class="abs" style="left:284px;top:382.4px;font-size:13.6px;color:#20242c;line-height:1;white-space:pre">VDB Modify (Velocity = Norm...</div><div class="abs" style="left:250px;top:404.5px"><svg width="23" height="23" viewBox="0 0 23 23"><rect x="1" y="1" width="21" height="21" fill="#e06a58" stroke="#25e02a" stroke-width="2"/><path d="M4 4L8 8M19 4L15 8M4 19L8 15M19 19L15 15" stroke="#f8d8d0" stroke-width="1.2"/><circle cx="11.5" cy="11.5" r="4" fill="#8fe0c8" stroke="#111" stroke-width="1.4" stroke-dasharray="1.5 1"/></svg></div><svg class="abs" style="left:272px;top:410.0px" width="7" height="12" viewBox="0 0 7 12"><path d="M0 0L6 6L0 12Z" fill="#25e02a"/></svg><div class="abs" style="left:284px;top:411.0px;font-size:13.6px;color:#20242c;line-height:1;white-space:pre">VDB Modify (Velocity x Noise)</div><div class="abs" style="left:250px;top:433.1px"><svg width="23" height="23" viewBox="0 0 23 23"><rect x="1" y="1" width="21" height="21" fill="#e06a58" stroke="#25e02a" stroke-width="2"/><circle cx="11.5" cy="11.5" r="8" fill="#8fe0c8" stroke="#111" stroke-width="1.6"/><rect x="8" y="6.5" width="7" height="10" fill="#111"/><rect x="9" y="8" width="5" height="2" fill="#8fe0c8"/></svg></div><svg class="abs" style="left:272px;top:438.6px" width="7" height="12" viewBox="0 0 7 12"><path d="M0 0L6 6L0 12Z" fill="#25e02a"/></svg><div class="abs" style="left:284px;top:439.6px;font-size:13.6px;color:#20242c;line-height:1;white-space:pre">VDB Solver</div><div class="abs" style="left:250px;top:461.5px"><svg width="23" height="23" viewBox="0 0 23 23"><rect x="1" y="1" width="21" height="21" fill="#e06a58" stroke="#101010" stroke-width="1.3"/><rect x="4" y="4" width="15" height="15" fill="#111"/><circle cx="9" cy="9" r="2.6" fill="#8fe0c8"/><circle cx="14" cy="9" r="2.6" fill="#8fe0c8"/><circle cx="9" cy="14" r="2.6" fill="#8fe0c8"/><circle cx="14" cy="14" r="2.6" fill="#8fe0c8"/><circle cx="11.5" cy="11.5" r="1" fill="#fff"/></svg></div><div class="abs" style="left:284px;top:468.0px;font-size:13.6px;color:#20242c;line-height:1;white-space:pre">VDB Mesh</div><div class="abs" style="left:454px;top:294px;width:16px;height:16px;border-radius:8px;background:#b85a68;border:1px solid #5a2030;box-sizing:border-box"></div><div class="abs" style="left:353px;top:495px;width:14px;height:14px;border-radius:7px;background:#d2d2d2;border:1.2px solid #151515;box-sizing:border-box"></div><div class="abs" style="left:6px;top:745px;font-size:13.1px;line-height:1;white-space:pre;color:#8a8a8a"><span style="color:#6b66d6">Caching enabled</span> | Static: NEVER</div><div class="abs" style="left:704px;top:745px;font-size:13.3px;line-height:1;white-space:pre;color:#8a8a8a">Press TAB for QuickType</div>
<div class="abs" style="left:2.8px;top:767.5px;width:21.5px;height:18px;background:#3e3e3e;border:1px solid #1a1a1a;border-bottom:none;border-radius:3px 3px 0 0;box-sizing:border-box"></div><svg class="abs" style="left:7.800000000000001px;top:771.5px" width="12" height="12" viewBox="0 0 12 12"><circle cx="3" cy="3" r="2" fill="#2ed040"/><circle cx="9" cy="3" r="2" fill="#7080e0"/><circle cx="3" cy="9" r="2" fill="#e03030"/><circle cx="9" cy="9" r="2" fill="#a070e0"/></svg><div class="abs" style="left:25.8px;top:767.5px;width:21.5px;height:18px;background:#3e3e3e;border:1px solid #1a1a1a;border-bottom:none;border-radius:3px 3px 0 0;box-sizing:border-box"></div><svg class="abs" style="left:30.8px;top:771.5px" width="12" height="12" viewBox="0 0 12 12"><rect x="0.5" y="0.5" width="11" height="11" fill="#8cc63f" stroke="#101010"/><rect x="4" y="4" width="4" height="4" fill="#fff" stroke="#111"/></svg><div class="abs" style="left:48.8px;top:767.5px;width:21.5px;height:18px;background:#3e3e3e;border:1px solid #1a1a1a;border-bottom:none;border-radius:3px 3px 0 0;box-sizing:border-box"></div><svg class="abs" style="left:53.8px;top:771.5px" width="12" height="12" viewBox="0 0 12 12"><rect x="0.5" y="0.5" width="11" height="11" fill="#3ddc6a" stroke="#101010"/><circle cx="6" cy="4" r="1.6" fill="#fff" stroke="#111" stroke-width="0.8"/><path d="M2 7H10" stroke="#111"/></svg><div class="abs" style="left:71.8px;top:767.5px;width:21.5px;height:18px;background:#3e3e3e;border:1px solid #1a1a1a;border-bottom:none;border-radius:3px 3px 0 0;box-sizing:border-box"></div><svg class="abs" style="left:76.8px;top:771.5px" width="12" height="12" viewBox="0 0 12 12"><rect x="0.5" y="0.5" width="11" height="11" fill="#f07070" stroke="#101010"/><path d="M2.5 2.5L9.5 9.5M9.5 2.5L2.5 9.5" stroke="#111" stroke-width="1.8"/></svg><div class="abs" style="left:94.8px;top:767.5px;width:21.5px;height:18px;background:#3e3e3e;border:1px solid #1a1a1a;border-bottom:none;border-radius:3px 3px 0 0;box-sizing:border-box"></div><svg class="abs" style="left:99.8px;top:771.5px" width="12" height="12" viewBox="0 0 12 12"><rect x="0.5" y="0.5" width="11" height="11" fill="#2aa0f0" stroke="#101010"/><rect x="2" y="2" width="3" height="3" fill="none" stroke="#111" stroke-width="0.8"/><rect x="7" y="7" width="3" height="3" fill="none" stroke="#111" stroke-width="0.8"/></svg><div class="abs" style="left:117.8px;top:767.5px;width:21.5px;height:18px;background:#3e3e3e;border:1px solid #1a1a1a;border-bottom:none;border-radius:3px 3px 0 0;box-sizing:border-box"></div><svg class="abs" style="left:122.8px;top:771.5px" width="12" height="12" viewBox="0 0 12 12"><rect x="0.5" y="0.5" width="11" height="11" fill="#40c8c0" stroke="#101010"/><rect x="4" y="2" width="4" height="8" fill="#b0f0e0" stroke="#111" stroke-width="0.8"/></svg><div class="abs" style="left:140.8px;top:767.5px;width:21.5px;height:18px;background:#3e3e3e;border:1px solid #1a1a1a;border-bottom:none;border-radius:3px 3px 0 0;box-sizing:border-box"></div><svg class="abs" style="left:145.8px;top:771.5px" width="12" height="12" viewBox="0 0 12 12"><rect x="0.5" y="0.5" width="11" height="11" fill="#1a4a9a" stroke="#101010"/><rect x="3" y="6" width="3" height="3" fill="#fff"/><rect x="6" y="3" width="3" height="3" fill="#ddd"/></svg><div class="abs" style="left:163.8px;top:767.5px;width:21.5px;height:18px;background:#3e3e3e;border:1px solid #1a1a1a;border-bottom:none;border-radius:3px 3px 0 0;box-sizing:border-box"></div><svg class="abs" style="left:168.8px;top:771.5px" width="12" height="12" viewBox="0 0 12 12"><rect x="0.5" y="0.5" width="11" height="11" fill="#e8e8d0" stroke="#101010"/><circle cx="6" cy="6" r="2" fill="#fff" stroke="#111"/><circle cx="3" cy="3" r="1" fill="#111"/><circle cx="9" cy="3" r="1" fill="#111"/><circle cx="3" cy="9" r="1" fill="#111"/><circle cx="9" cy="9" r="1" fill="#111"/></svg><div class="abs" style="left:186.8px;top:767.5px;width:21.5px;height:18px;background:#3e3e3e;border:1px solid #1a1a1a;border-bottom:none;border-radius:3px 3px 0 0;box-sizing:border-box"></div><svg class="abs" style="left:191.8px;top:771.5px" width="12" height="12" viewBox="0 0 12 12"><rect x="0.5" y="0.5" width="11" height="11" fill="#e040e0" stroke="#101010"/><circle cx="8" cy="4" r="1.3" fill="#fff" stroke="#111" stroke-width="0.6"/><circle cx="4" cy="8" r="1.3" fill="#fff" stroke="#111" stroke-width="0.6"/></svg><div class="abs" style="left:209.8px;top:767.5px;width:21.5px;height:18px;background:#3e3e3e;border:1px solid #1a1a1a;border-bottom:none;border-radius:3px 3px 0 0;box-sizing:border-box"></div><svg class="abs" style="left:214.8px;top:771.5px" width="12" height="12" viewBox="0 0 12 12"><rect x="0.5" y="0.5" width="11" height="11" fill="#8050e0" stroke="#101010"/><rect x="3" y="3" width="6" height="6" fill="#eee"/><rect x="4.5" y="4.5" width="3" height="3" fill="#777"/></svg><div class="abs" style="left:232.8px;top:767.5px;width:21.5px;height:18px;background:#3e3e3e;border:1px solid #1a1a1a;border-bottom:none;border-radius:3px 3px 0 0;box-sizing:border-box"></div><svg class="abs" style="left:237.8px;top:771.5px" width="12" height="12" viewBox="0 0 12 12"><rect x="0.5" y="0.5" width="11" height="11" fill="#d8ecff" stroke="#101010"/><path d="M6 2V10M2 5L10 7M2 7L10 5" stroke="#1a70d0" stroke-width="1.5"/></svg><div class="abs" style="left:255.8px;top:767.5px;width:21.5px;height:18px;background:#3e3e3e;border:1px solid #1a1a1a;border-bottom:none;border-radius:3px 3px 0 0;box-sizing:border-box"></div><svg class="abs" style="left:260.8px;top:771.5px" width="12" height="12" viewBox="0 0 12 12"><rect x="0.5" y="0.5" width="11" height="11" fill="#f09030" stroke="#101010"/><rect x="3" y="5" width="6" height="4" fill="#e8d020" stroke="#111" stroke-width="0.8"/></svg><div class="abs" style="left:278.8px;top:767.5px;width:21.5px;height:18px;background:#3e3e3e;border:1px solid #1a1a1a;border-bottom:none;border-radius:3px 3px 0 0;box-sizing:border-box"></div><svg class="abs" style="left:283.8px;top:771.5px" width="12" height="12" viewBox="0 0 12 12"><rect x="0.5" y="0.5" width="11" height="11" fill="#f0f080" stroke="#101010"/><rect x="3" y="2" width="5" height="8" fill="#fff" stroke="#111" stroke-width="0.8"/></svg><div class="abs" style="left:301.8px;top:767.5px;width:21.5px;height:18px;background:#3e3e3e;border:1px solid #1a1a1a;border-bottom:none;border-radius:3px 3px 0 0;box-sizing:border-box"></div><svg class="abs" style="left:306.8px;top:771.5px" width="12" height="12" viewBox="0 0 12 12"><rect x="0.5" y="0.5" width="11" height="11" fill="#40c8b0" stroke="#101010"/><rect x="3" y="6" width="6" height="3" fill="#eee"/><rect x="5" y="2" width="2" height="2" fill="#111"/></svg><div class="abs" style="left:324.8px;top:767.5px;width:21.5px;height:18px;background:#3e3e3e;border:1px solid #1a1a1a;border-bottom:none;border-radius:3px 3px 0 0;box-sizing:border-box"></div><svg class="abs" style="left:329.8px;top:771.5px" width="12" height="12" viewBox="0 0 12 12"><rect x="0.5" y="0.5" width="11" height="11" fill="#2a50c0" stroke="#101010"/><path d="M2 6H7M6 3L10 6L6 9Z" stroke="#30e040" stroke-width="1.5" fill="#30e040"/></svg><div class="abs" style="left:347.8px;top:767.5px;width:21.5px;height:18px;background:#3e3e3e;border:1px solid #1a1a1a;border-bottom:none;border-radius:3px 3px 0 0;box-sizing:border-box"></div><svg class="abs" style="left:352.8px;top:771.5px" width="12" height="12" viewBox="0 0 12 12"><rect x="0.5" y="0.5" width="11" height="11" fill="#f08070" stroke="#101010"/><path d="M6 2L10 6L6 10L2 6Z" fill="#90f0e0" stroke="#111" stroke-width="0.8"/></svg><div class="abs" style="left:370.8px;top:767.5px;width:21.5px;height:18px;background:#3e3e3e;border:1px solid #1a1a1a;border-bottom:none;border-radius:3px 3px 0 0;box-sizing:border-box"></div><svg class="abs" style="left:375.8px;top:771.5px" width="12" height="12" viewBox="0 0 12 12"><rect x="0.5" y="0.5" width="11" height="11" fill="#d0a030" stroke="#101010"/><path d="M1 1H11L1 8Z" fill="#f0c040"/><path d="M1 8L8 4" stroke="#4a70e0" stroke-width="2"/></svg><div class="abs" style="left:393.8px;top:767.5px;width:21.5px;height:18px;background:#3e3e3e;border:1px solid #1a1a1a;border-bottom:none;border-radius:3px 3px 0 0;box-sizing:border-box"></div><svg class="abs" style="left:398.8px;top:771.5px" width="12" height="12" viewBox="0 0 12 12"><rect x="0.5" y="0.5" width="11" height="11" fill="#a050b0" stroke="#101010"/><rect x="4.5" y="2" width="3" height="3" fill="#111"/><rect x="4.5" y="6" width="3" height="4" fill="#fff"/></svg><div class="abs" style="left:1px;top:786.5px;width:860px;height:3.5px;background:#8c8c8c;border-radius:2px"></div><div class="abs" style="left:0;top:790px;width:862.5px;height:226px;overflow:hidden"><div class="abs" style="left:12.6px;top:3.0px"><svg width="23" height="23" viewBox="0 0 23 23"><rect x="0.75" y="0.75" width="21.5" height="21.5" fill="#7ec03c" stroke="#101010" stroke-width="1.5"/><circle cx="6" cy="6" r="1.8" fill="#fff" stroke="#111" stroke-width="1"/><circle cx="16" cy="6" r="1.8" fill="#fff" stroke="#111" stroke-width="1"/><circle cx="11" cy="11" r="1.8" fill="#fff" stroke="#111" stroke-width="1"/><circle cx="6" cy="16" r="1.8" fill="#fff" stroke="#111" stroke-width="1"/><circle cx="16" cy="16" r="1.8" fill="#fff" stroke="#111" stroke-width="1"/></svg></div><div class="op" style="left:47.3px;top:8.5px">Birth</div><div class="abs" style="left:12.6px;top:27.9px"><svg width="23" height="23" viewBox="0 0 23 23"><rect x="0.75" y="0.75" width="21.5" height="21.5" fill="#7ec03c" stroke="#101010" stroke-width="1.5"/><path d="M6 3V14M11 3V14M16 3V14" stroke="#111" stroke-dasharray="1.5 1.5"/><circle cx="6" cy="13" r="1.8" fill="#fff" stroke="#111" stroke-width="1"/><circle cx="16" cy="13" r="1.8" fill="#fff" stroke="#111" stroke-width="1"/><circle cx="11" cy="17" r="1.8" fill="#fff" stroke="#111" stroke-width="1"/></svg></div><div class="op" style="left:47.3px;top:33.4px">Birth Burst</div><div class="abs" style="left:12.6px;top:52.8px"><svg width="23" height="23" viewBox="0 0 23 23"><rect x="0.75" y="0.75" width="21.5" height="21.5" fill="#7ec03c" stroke="#101010" stroke-width="1.5"/><circle cx="5" cy="13" r="1.7" fill="#fff" stroke="#111" stroke-width="1"/><circle cx="5" cy="18" r="1.7" fill="#fff" stroke="#111" stroke-width="1"/><circle cx="10" cy="18" r="1.7" fill="#fff" stroke="#111" stroke-width="1"/><path d="M8 14L14 8M8 11V14H11" stroke="#111" stroke-width="1.2" fill="none"/><rect x="12" y="3" width="3" height="3" fill="#111"/><rect x="17" y="3" width="3" height="3" fill="#111"/><rect x="17" y="8" width="3" height="3" fill="#111"/></svg></div><div class="op" style="left:47.3px;top:58.3px">Birth Flow</div><div class="abs" style="left:12.6px;top:77.6px"><svg width="23" height="23" viewBox="0 0 23 23"><rect x="0.75" y="0.75" width="21.5" height="21.5" fill="#7ec03c" stroke="#101010" stroke-width="1.5"/><path d="M5 6C4 9 8 11 7 13C6 17 9 19 12 18C16 17 16 13 15 10C15 8 16 7 17 6" stroke="#111" stroke-width="1.4" fill="none"/><path d="M2 6L6 3V8Z M20 6L16 3V8Z" fill="#111"/></svg></div><div class="op" style="left:47.3px;top:83.1px">Birth Fluid</div><div class="abs" style="left:12.6px;top:102.5px"><svg width="23" height="23" viewBox="0 0 23 23"><rect x="0.75" y="0.75" width="21.5" height="21.5" fill="#7ec03c" stroke="#101010" stroke-width="1.5"/><path d="M1 1L11 12L22 1V22L11 12L1 22Z" fill="#cfe8cf"/><path d="M8 22L11 17L14 22Z" fill="#e05050"/><path d="M11 3V10" stroke="#111" stroke-dasharray="1.5 1.5"/></svg></div><div class="op" style="left:47.3px;top:108.0px">Birth Intersections</div><div class="abs" style="left:12.6px;top:127.4px"><svg width="23" height="23" viewBox="0 0 23 23"><rect x="0.75" y="0.75" width="21.5" height="21.5" fill="#7ec03c" stroke="#101010" stroke-width="1.5"/><rect x="5" y="8" width="10" height="10" fill="#f0f0f0" stroke="#111" stroke-width="1.3"/><path d="M5 8L8 5H18V15L15 18M15 8L18 5" stroke="#111" stroke-width="1.3" fill="#ddd"/></svg></div><div class="op" style="left:47.3px;top:132.9px">Birth Objects</div><div class="abs" style="left:12.6px;top:152.3px"><svg width="23" height="23" viewBox="0 0 23 23"><rect x="0.75" y="0.75" width="21.5" height="21.5" fill="#7ec03c" stroke="#101010" stroke-width="1.5"/><path d="M6 17L16 7" stroke="#111" stroke-dasharray="2 1.5"/><path d="M12 11L17 5L19 7L13 13Z" fill="#4aa8e8" stroke="#111"/><circle cx="5" cy="18" r="1.5" fill="#fff" stroke="#111" stroke-width="1"/></svg></div><div class="op" style="left:47.3px;top:157.8px">Birth Paint</div><div class="abs" style="left:12.6px;top:177.2px"><svg width="23" height="23" viewBox="0 0 23 23"><rect x="0.75" y="0.75" width="21.5" height="21.5" fill="#7ec03c" stroke="#101010" stroke-width="1.5"/><rect x="7" y="3" width="9" height="8" fill="#eee" stroke="#111"/><text x="3" y="20" font-size="7.5" font-family="Liberation Sans" font-weight="bold" fill="#111">PRT</text></svg></div><div class="op" style="left:47.3px;top:182.7px">Birth PRT</div><div class="abs" style="left:12.6px;top:202.0px"><svg width="23" height="23" viewBox="0 0 23 23"><rect x="0.75" y="0.75" width="21.5" height="21.5" fill="#7ec03c" stroke="#101010" stroke-width="1.5"/><path d="M1 1H22L14 10V22H9V10Z" fill="#999" stroke="#111"/><rect x="4" y="3" width="3" height="3" fill="#eee" stroke="#111" stroke-width="0.8"/><rect x="10" y="3" width="3" height="3" fill="#eee" stroke="#111" stroke-width="0.8"/><rect x="16" y="3" width="3" height="3" fill="#eee" stroke="#111" stroke-width="0.8"/><rect x="10" y="9" width="3" height="3" fill="#eee" stroke="#111" stroke-width="0.8"/><rect x="10" y="15" width="3" height="3" fill="#eee" stroke="#111" stroke-width="0.8"/></svg></div><div class="op" style="left:47.3px;top:207.5px">Birth Skeleton</div><div class="abs" style="left:198.8px;top:3.0px"><svg width="23" height="23" viewBox="0 0 23 23"><rect x="0.75" y="0.75" width="21.5" height="21.5" fill="#7ec03c" stroke="#101010" stroke-width="1.5"/><path d="M4 6C8 10 12 3 18 6M4 12C8 16 12 9 18 12M4 18C8 22 12 15 18 18" stroke="#111" stroke-width="1.3" fill="none"/><circle cx="9" cy="6" r="1.5" fill="#fff" stroke="#111" stroke-width="1"/><circle cx="16" cy="5" r="1.5" fill="#fff" stroke="#111" stroke-width="1"/><circle cx="11" cy="12" r="1.5" fill="#fff" stroke="#111" stroke-width="1"/><circle cx="17" cy="11" r="1.5" fill="#fff" stroke="#111" stroke-width="1"/><circle cx="8" cy="18" r="1.5" fill="#fff" stroke="#111" stroke-width="1"/><circle cx="16" cy="17" r="1.5" fill="#fff" stroke="#111" stroke-width="1"/></svg></div><div class="op" style="left:233.3px;top:8.5px">Birth Spline</div><div class="abs" style="left:198.8px;top:27.9px"><svg width="23" height="23" viewBox="0 0 23 23"><rect x="0.75" y="0.75" width="21.5" height="21.5" fill="#7ec03c" stroke="#101010" stroke-width="1.5"/><rect x="5" y="7" width="11" height="11" fill="#eee" stroke="#111" stroke-width="1.3"/><path d="M5 7L8 4H18V14L16 18M16 7L18 4" stroke="#111" stroke-width="1.3" fill="none"/><circle cx="5" cy="7" r="1.4" fill="#fff" stroke="#111" stroke-width="1"/><circle cx="16" cy="7" r="1.4" fill="#fff" stroke="#111" stroke-width="1"/><circle cx="5" cy="18" r="1.4" fill="#fff" stroke="#111" stroke-width="1"/><circle cx="16" cy="18" r="1.4" fill="#fff" stroke="#111" stroke-width="1"/></svg></div><div class="op" style="left:233.3px;top:33.4px">Birth Surface</div><div class="abs" style="left:198.8px;top:52.8px"><svg width="23" height="23" viewBox="0 0 23 23"><rect x="0.75" y="0.75" width="21.5" height="21.5" fill="#7ec03c" stroke="#101010" stroke-width="1.5"/><path d="M7 4H18L19 5V15L15 19" fill="none" stroke="#111" stroke-width="1.2"/><rect x="4" y="7" width="4" height="4" fill="#fff" stroke="#111" stroke-width="1"/><rect x="4" y="11.5" width="4" height="4" fill="#fff" stroke="#111" stroke-width="1"/><rect x="4" y="16" width="4" height="4" fill="#fff" stroke="#111" stroke-width="1"/><rect x="8.5" y="7" width="4" height="4" fill="#fff" stroke="#111" stroke-width="1"/><rect x="8.5" y="11.5" width="4" height="4" fill="#fff" stroke="#111" stroke-width="1"/><rect x="8.5" y="16" width="4" height="4" fill="#fff" stroke="#111" stroke-width="1"/><rect x="13" y="7" width="4" height="4" fill="#fff" stroke="#111" stroke-width="1"/><rect x="13" y="11.5" width="4" height="4" fill="#fff" stroke="#111" stroke-width="1"/><rect x="13" y="16" width="4" height="4" fill="#fff" stroke="#111" stroke-width="1"/></svg></div><div class="op" style="left:233.3px;top:58.3px">Birth Voxels</div><div class="abs" style="left:198.8px;top:77.6px"><svg width="23" height="23" viewBox="0 0 23 23"><rect x="0.75" y="0.75" width="21.5" height="21.5" fill="#3fe070" stroke="#101010" stroke-width="1.5"/><circle cx="6" cy="6" r="1.5" fill="#fff" stroke="#111" stroke-width="1"/><circle cx="11" cy="6" r="1.5" fill="#fff" stroke="#111" stroke-width="1"/><circle cx="16" cy="6" r="1.5" fill="#fff" stroke="#111" stroke-width="1"/><circle cx="6" cy="11" r="1.5" fill="#fff" stroke="#111" stroke-width="1"/><circle cx="16" cy="11" r="1.5" fill="#fff" stroke="#111" stroke-width="1"/><circle cx="6" cy="16" r="1.5" fill="#fff" stroke="#111" stroke-width="1"/><circle cx="11" cy="16" r="1.5" fill="#fff" stroke="#111" stroke-width="1"/><circle cx="16" cy="16" r="1.5" fill="#fff" stroke="#111" stroke-width="1"/><path d="M9 11H13M11 9V13" stroke="#111" stroke-width="1.6"/></svg></div><div class="op" style="left:233.3px;top:83.1px">Array</div><div class="abs" style="left:198.8px;top:102.5px"><svg width="23" height="23" viewBox="0 0 23 23"><rect x="0.75" y="0.75" width="21.5" height="21.5" fill="#3fe070" stroke="#101010" stroke-width="1.5"/><path d="M11 3V20M11 8L5 4M11 8L17 4M11 12L4 8M11 12L18 8M11 16L5 12M11 16L17 12" stroke="#111" stroke-width="1.4" fill="none"/></svg></div><div class="op" style="left:233.3px;top:108.0px">Branch</div><div class="abs" style="left:198.8px;top:127.4px"><svg width="23" height="23" viewBox="0 0 23 23"><rect x="0.75" y="0.75" width="21.5" height="21.5" fill="#3fe070" stroke="#101010" stroke-width="1.5"/><path d="M5 18C10 14 8 8 14 5M8 12L15 16M14 5L18 9" stroke="#111" stroke-width="1.8" fill="none"/><circle cx="5" cy="5" r="1.5" fill="#fff" stroke="#111" stroke-width="1"/><circle cx="17" cy="17" r="1.5" fill="#fff" stroke="#111" stroke-width="1"/></svg></div><div class="op" style="left:233.3px;top:132.9px">Grow</div><div class="abs" style="left:198.8px;top:152.3px"><svg width="23" height="23" viewBox="0 0 23 23"><rect x="0.75" y="0.75" width="21.5" height="21.5" fill="#3fe070" stroke="#101010" stroke-width="1.5"/><path d="M5 5L9 9M17 17L13 13" stroke="#111" stroke-width="1.3"/><circle cx="17" cy="5" r="1.3" fill="#fff" stroke="#111" stroke-width="1"/><circle cx="5" cy="17" r="1.3" fill="#fff" stroke="#111" stroke-width="1"/><circle cx="11" cy="11" r="1.3" fill="#fff" stroke="#111" stroke-width="1"/></svg></div><div class="op" style="left:233.3px;top:157.8px">Resample</div><div class="abs" style="left:198.8px;top:177.2px"><svg width="23" height="23" viewBox="0 0 23 23"><rect x="0.75" y="0.75" width="21.5" height="21.5" fill="#3fe070" stroke="#101010" stroke-width="1.5"/><path d="M11 6V10M4 11H18M5 11V15M17 11V15" stroke="#111" stroke-width="1.6"/><circle cx="11" cy="5" r="1.8" fill="#fff" stroke="#111" stroke-width="1"/><circle cx="6" cy="18" r="1.8" fill="#fff" stroke="#111" stroke-width="1"/><circle cx="16" cy="18" r="1.8" fill="#fff" stroke="#111" stroke-width="1"/></svg></div><div class="op" style="left:233.3px;top:182.7px">Spawn</div><div class="abs" style="left:198.8px;top:202.0px"><svg width="23" height="23" viewBox="0 0 23 23"><rect x="0.75" y="0.75" width="21.5" height="21.5" fill="#f05a5a" stroke="#101010" stroke-width="1.5"/><path d="M4 4L18 18M18 4L4 18" stroke="#111" stroke-width="2.5"/></svg></div><div class="op" style="left:233.3px;top:207.5px">Delete</div><div class="abs" style="left:385.5px;top:3.0px"><svg width="23" height="23" viewBox="0 0 23 23"><rect x="0.75" y="0.75" width="21.5" height="21.5" fill="#1aa0f4" stroke="#101010" stroke-width="1.5"/><rect x="3" y="3" width="16" height="16" fill="none" stroke="#111" stroke-width="0.8" stroke-dasharray="1 1.5"/><rect x="7" y="6" width="3" height="3" fill="#fff" stroke="#111"/><rect x="13" y="10" width="3" height="3" fill="#fff" stroke="#111"/><rect x="7" y="13" width="3" height="3" fill="#fff" stroke="#111"/></svg></div><div class="op" style="left:419.7px;top:8.5px">Boundary</div><div class="abs" style="left:385.5px;top:27.9px"><svg width="23" height="23" viewBox="0 0 23 23"><rect x="0.75" y="0.75" width="21.5" height="21.5" fill="#1aa0f4" stroke="#101010" stroke-width="1.5"/><path d="M1 1H9V22H1Z" fill="#40e0b0"/><path d="M8 6H17M14 4L17 6L14 8M17 11H8M11 9L8 11L11 13M8 16H17M14 14L17 16L14 18" stroke="#111" stroke-width="1.4" fill="none"/><circle cx="5" cy="6" r="1.5" fill="#fff" stroke="#111" stroke-width="1"/><circle cx="16" cy="11" r="1.5" fill="#fff" stroke="#111" stroke-width="1"/><circle cx="5" cy="16" r="1.5" fill="#fff" stroke="#111" stroke-width="1"/></svg></div><div class="op" style="left:419.7px;top:33.4px">Cluster Force</div><div class="abs" style="left:385.5px;top:52.8px"><svg width="23" height="23" viewBox="0 0 23 23"><rect x="0.75" y="0.75" width="21.5" height="21.5" fill="#1aa0f4" stroke="#101010" stroke-width="1.5"/><circle cx="6" cy="7" r="1.8" fill="#fff" stroke="#111" stroke-width="1"/><circle cx="14" cy="7" r="1.8" fill="#fff" stroke="#111" stroke-width="1"/><circle cx="6" cy="16" r="1.8" fill="#fff" stroke="#111" stroke-width="1"/><circle cx="14" cy="16" r="1.8" fill="#fff" stroke="#111" stroke-width="1"/><path d="M9 4V7M17 4V7M9 13V16M17 13V16" stroke="#fff" stroke-width="1.5"/></svg></div><div class="op" style="left:419.7px;top:58.3px">Flock</div><div class="abs" style="left:385.5px;top:77.6px"><svg width="23" height="23" viewBox="0 0 23 23"><rect x="0.75" y="0.75" width="21.5" height="21.5" fill="#1aa0f4" stroke="#101010" stroke-width="1.5"/><circle cx="5" cy="13" r="1.4" fill="#fff" stroke="#111" stroke-width="1"/><circle cx="9" cy="13" r="1.4" fill="#fff" stroke="#111" stroke-width="1"/><circle cx="5" cy="17" r="1.4" fill="#fff" stroke="#111" stroke-width="1"/><circle cx="9" cy="17" r="1.4" fill="#fff" stroke="#111" stroke-width="1"/><path d="M9 11L15 6" stroke="#111" stroke-width="1.2"/><rect x="13" y="4" width="3" height="3" fill="#eee" stroke="#111" stroke-width="0.8"/><rect x="17" y="4" width="3" height="3" fill="#eee" stroke="#111" stroke-width="0.8"/></svg></div><div class="op" style="left:419.7px;top:83.1px">Flow Update</div><div class="abs" style="left:385.5px;top:102.5px"><svg width="23" height="23" viewBox="0 0 23 23"><rect x="0.75" y="0.75" width="21.5" height="21.5" fill="#1aa0f4" stroke="#101010" stroke-width="1.5"/><path d="M5 6C4 9 8 11 7 13C6 17 9 19 12 18C16 17 16 13 15 10C15 8 16 7 17 6" stroke="#111" stroke-width="1.4" fill="none"/><path d="M2 6L6 3V8Z M20 6L16 3V8Z" fill="#111"/></svg></div><div class="op" style="left:419.7px;top:108.0px">Fluid Force</div><div class="abs" style="left:385.5px;top:127.4px"><svg width="23" height="23" viewBox="0 0 23 23"><rect x="0.75" y="0.75" width="21.5" height="21.5" fill="#1aa0f4" stroke="#101010" stroke-width="1.5"/><ellipse cx="11" cy="6" rx="6" ry="2.5" fill="#a0d8ff" stroke="#111"/><path d="M11 6V19M8 16L11 19L14 16" stroke="#111" stroke-width="1.3" fill="none"/></svg></div><div class="op" style="left:419.7px;top:132.9px">Force</div><div class="abs" style="left:385.5px;top:152.3px"><svg width="23" height="23" viewBox="0 0 23 23"><rect x="0.75" y="0.75" width="21.5" height="21.5" fill="#1aa0f4" stroke="#101010" stroke-width="1.5"/><rect x="4" y="4" width="6" height="6" fill="#eee" stroke="#111"/><path d="M5 19L9 15L12 18L17 10" stroke="#111" stroke-width="1.3" fill="none"/></svg></div><div class="op" style="left:419.7px;top:157.8px">Hair Bind</div><div class="abs" style="left:385.5px;top:177.2px"><svg width="23" height="23" viewBox="0 0 23 23"><rect x="0.75" y="0.75" width="21.5" height="21.5" fill="#1aa0f4" stroke="#101010" stroke-width="1.5"/><circle cx="5" cy="5" r="1.8" fill="#fff" stroke="#111" stroke-width="1"/><circle cx="17" cy="17" r="1.8" fill="#fff" stroke="#111" stroke-width="1"/><path d="M5 8V17M8 5H16V14" stroke="#111" stroke-dasharray="1.5 1.2" fill="none"/></svg></div><div class="op" style="left:419.7px;top:182.7px">Integrate</div><div class="abs" style="left:385.5px;top:202.0px"><svg width="23" height="23" viewBox="0 0 23 23"><rect x="0.75" y="0.75" width="21.5" height="21.5" fill="#1aa0f4" stroke="#101010" stroke-width="1.5"/><path d="M11 3V19M3 11H19" stroke="#111" stroke-width="1.5"/><path d="M8 6L11 3L14 6M8 16L11 19L14 16M6 8L3 11L6 14M16 8L19 11L16 14" fill="#111"/><circle cx="11" cy="11" r="2.2" fill="#fff"/></svg></div><div class="op" style="left:419.7px;top:207.5px">Limiter</div><div class="abs" style="left:571.5px;top:3.0px"><svg width="23" height="23" viewBox="0 0 23 23"><rect x="0.75" y="0.75" width="21.5" height="21.5" fill="#1aa0f4" stroke="#101010" stroke-width="1.5"/><path d="M5 8H17L19 19H3Z" fill="#eee" stroke="#111"/><text x="5" y="17" font-size="7" font-family="Liberation Sans" font-weight="bold" fill="#111">KG</text><circle cx="11" cy="5.5" r="2" fill="none" stroke="#111"/></svg></div><div class="op" style="left:606.3px;top:8.5px">Mass</div><div class="abs" style="left:571.5px;top:27.9px"><svg width="23" height="23" viewBox="0 0 23 23"><rect x="0.75" y="0.75" width="21.5" height="21.5" fill="#1aa0f4" stroke="#101010" stroke-width="1.5"/><path d="M1 22V15L11 5L22 15V22Z" fill="#90d0ff"/><rect x="7" y="12" width="8" height="7" fill="#eee" stroke="#111"/></svg></div><div class="op" style="left:606.3px;top:33.4px">Object Bind</div><div class="abs" style="left:571.5px;top:52.8px"><svg width="23" height="23" viewBox="0 0 23 23"><rect x="0.75" y="0.75" width="21.5" height="21.5" fill="#1aa0f4" stroke="#101010" stroke-width="1.5"/><circle cx="11" cy="11" r="2.5" fill="#fff" stroke="#111" stroke-width="1"/><path d="M4 18L9 13M13 9L18 4" stroke="#111" stroke-width="1.3"/><circle cx="5" cy="6" r="1.2" fill="#fff" stroke="#111" stroke-width="1"/><circle cx="17" cy="16" r="1.2" fill="#fff" stroke="#111" stroke-width="1"/></svg></div><div class="op" style="left:606.3px;top:58.3px">Particle Force</div><div class="abs" style="left:571.5px;top:77.6px"><svg width="23" height="23" viewBox="0 0 23 23"><rect x="0.75" y="0.75" width="21.5" height="21.5" fill="#1aa0f4" stroke="#101010" stroke-width="1.5"/><circle cx="4" cy="5" r="1.2" fill="#eee"/><circle cx="8" cy="5" r="1.2" fill="#eee"/><circle cx="12" cy="5" r="1.2" fill="#eee"/><circle cx="4" cy="9" r="1.2" fill="#eee"/><circle cx="8" cy="9" r="1.2" fill="#eee"/><circle cx="12" cy="15" r="1.2" fill="#eee"/><circle cx="16" cy="15" r="1.2" fill="#eee"/><circle cx="12" cy="19" r="1.2" fill="#eee"/><circle cx="16" cy="19" r="1.2" fill="#eee"/></svg></div><div class="op" style="left:606.3px;top:83.1px">Particle Groups</div><div class="abs" style="left:571.5px;top:102.5px"><svg width="23" height="23" viewBox="0 0 23 23"><rect x="0.75" y="0.75" width="21.5" height="21.5" fill="#1aa0f4" stroke="#101010" stroke-width="1.5"/><path d="M4 6H15C18 6 18 11 15 11H7C4 11 4 16 7 16H17" stroke="#111" stroke-width="2" fill="none"/><path d="M15 13L18 16L15 19" stroke="#111" stroke-width="1.8" fill="none"/></svg></div><div class="op" style="left:606.3px;top:108.0px">Path Follow</div><div class="abs" style="left:571.5px;top:127.4px"><svg width="23" height="23" viewBox="0 0 23 23"><rect x="0.75" y="0.75" width="21.5" height="21.5" fill="#1aa0f4" stroke="#101010" stroke-width="1.5"/><circle cx="7" cy="7" r="3.5" fill="none" stroke="#111" stroke-width="1.5"/><circle cx="7" cy="7" r="1.2" fill="#111"/><path d="M11 11L18 18" stroke="#eee" stroke-dasharray="1 2"/></svg></div><div class="op" style="left:606.3px;top:132.9px">Point Force</div><div class="abs" style="left:571.5px;top:152.3px"><svg width="23" height="23" viewBox="0 0 23 23"><rect x="0.75" y="0.75" width="21.5" height="21.5" fill="#1aa0f4" stroke="#101010" stroke-width="1.5"/><rect x="3" y="15" width="3" height="3" fill="#eee"/><rect x="9" y="15" width="3" height="3" fill="#eee"/><rect x="15" y="15" width="3" height="3" fill="#eee"/><rect x="6" y="18" width="3" height="3" fill="#eee"/><rect x="12" y="18" width="3" height="3" fill="#eee"/><rect x="18" y="18" width="3" height="3" fill="#eee"/><circle cx="5" cy="6" r="1.3" fill="#fff" stroke="#111" stroke-width="1"/><circle cx="11" cy="6" r="1.3" fill="#fff" stroke="#111" stroke-width="1"/><circle cx="17" cy="6" r="1.3" fill="#fff" stroke="#111" stroke-width="1"/></svg></div><div class="op" style="left:606.3px;top:157.8px">Position Displace</div><div class="abs" style="left:571.5px;top:177.2px"><svg width="23" height="23" viewBox="0 0 23 23"><rect x="0.75" y="0.75" width="21.5" height="21.5" fill="#1aa0f4" stroke="#101010" stroke-width="1.5"/><path d="M5 20C5 12 7 10 7 4M11 20C11 14 13 10 11 4M17 20C17 12 15 10 16 4" stroke="#111" stroke-width="1.3" fill="none"/></svg></div><div class="op" style="left:606.3px;top:182.7px">Position Hair</div><div class="abs" style="left:571.5px;top:202.0px"><svg width="23" height="23" viewBox="0 0 23 23"><rect x="0.75" y="0.75" width="21.5" height="21.5" fill="#1aa0f4" stroke="#101010" stroke-width="1.5"/><rect x="5" y="5" width="12" height="12" fill="none" stroke="#111" stroke-width="1.3"/><circle cx="11" cy="11" r="3" fill="none" stroke="#111" stroke-width="1.3"/><circle cx="5" cy="5" r="1.5" fill="#fff" stroke="#111" stroke-width="1"/><circle cx="17" cy="5" r="1.5" fill="#fff" stroke="#111" stroke-width="1"/><circle cx="5" cy="17" r="1.5" fill="#fff" stroke="#111" stroke-width="1"/><circle cx="17" cy="17" r="1.5" fill="#fff" stroke="#111" stroke-width="1"/></svg></div><div class="op" style="left:606.3px;top:207.5px">Position Icon</div><div class="abs" style="left:757.7px;top:3.0px"><svg width="23" height="23" viewBox="0 0 23 23"><rect x="0.75" y="0.75" width="21.5" height="21.5" fill="#1aa0f4" stroke="#101010" stroke-width="1.5"/><rect x="5" y="6" width="12" height="12" fill="#eee" stroke="#111" stroke-width="1.3"/><circle cx="5" cy="6" r="1.4" fill="#fff" stroke="#111" stroke-width="1"/><circle cx="17" cy="6" r="1.4" fill="#fff" stroke="#111" stroke-width="1"/><circle cx="5" cy="18" r="1.4" fill="#fff" stroke="#111" stroke-width="1"/><circle cx="17" cy="18" r="1.4" fill="#fff" stroke="#111" stroke-width="1"/></svg></div><div class="op" style="left:792.6px;top:8.5px">Position Object</div><div class="abs" style="left:757.7px;top:27.9px"><svg width="23" height="23" viewBox="0 0 23 23"><rect x="0.75" y="0.75" width="21.5" height="21.5" fill="#1aa0f4" stroke="#101010" stroke-width="1.5"/><path d="M4 4L9 9M9 4L14 9M14 4L19 9" stroke="#111" stroke-width="1.2"/><path d="M1 22L11 13L22 22Z" fill="#90d0ff"/><circle cx="11" cy="14" r="1.8" fill="#fff" stroke="#111" stroke-width="1"/></svg></div><div class="op" style="left:792.6px;top:33.4px">Position Raycast</div><div class="abs" style="left:757.7px;top:52.8px"><svg width="23" height="23" viewBox="0 0 23 23"><rect x="0.75" y="0.75" width="21.5" height="21.5" fill="#1aa0f4" stroke="#101010" stroke-width="1.5"/><path d="M1 22L22 1V22Z" fill="#40d0a0"/><rect x="4" y="4" width="5" height="5" fill="none" stroke="#111" stroke-width="1.3"/><rect x="14" y="14" width="4" height="4" fill="#111"/><path d="M6 16L16 6" stroke="#111" stroke-width="1.3"/></svg></div><div class="op" style="left:792.6px;top:58.3px">Position Transfer</div><div class="abs" style="left:757.7px;top:77.6px"><svg width="23" height="23" viewBox="0 0 23 23"><rect x="0.75" y="0.75" width="21.5" height="21.5" fill="#1aa0f4" stroke="#101010" stroke-width="1.5"/><rect x="7" y="3" width="9" height="8" fill="#eee" stroke="#111"/><text x="3" y="20" font-size="7.5" font-family="Liberation Sans" font-weight="bold" fill="#111">PRT</text></svg></div><div class="op" style="left:792.6px;top:83.1px">PRT Update</div><div class="abs" style="left:757.7px;top:102.5px"><svg width="23" height="23" viewBox="0 0 23 23"><rect x="0.75" y="0.75" width="21.5" height="21.5" fill="#1aa0f4" stroke="#101010" stroke-width="1.5"/><path d="M1 22L11 13L22 22Z" fill="#90d0ff"/><path d="M11 3V20" stroke="#111" stroke-width="1.5"/><circle cx="11" cy="5" r="1.6" fill="#fff" stroke="#111"/></svg></div><div class="op" style="left:792.6px;top:108.0px">Push In/Out</div><div class="abs" style="left:757.7px;top:127.4px"><svg width="23" height="23" viewBox="0 0 23 23"><rect x="0.75" y="0.75" width="21.5" height="21.5" fill="#1aa0f4" stroke="#101010" stroke-width="1.5"/><rect x="3" y="3" width="3" height="3" fill="#111"/><rect x="3" y="9.5" width="3" height="3" fill="#111"/><rect x="3" y="16" width="3" height="3" fill="#111"/><rect x="9.5" y="3" width="3" height="3" fill="#111"/><rect x="9.5" y="9.5" width="3" height="3" fill="#111"/><rect x="9.5" y="16" width="3" height="3" fill="#111"/><rect x="16" y="3" width="3" height="3" fill="#111"/><rect x="16" y="9.5" width="3" height="3" fill="#111"/><rect x="16" y="16" width="3" height="3" fill="#111"/><path d="M3 7.5H19M3 14H19M7.5 3V19M14 3V19" stroke="#eee" stroke-dasharray="1 1.3"/></svg></div><div class="op" style="left:792.6px;top:132.9px">Rasterize</div><div class="abs" style="left:757.7px;top:152.3px"><svg width="23" height="23" viewBox="0 0 23 23"><rect x="0.75" y="0.75" width="21.5" height="21.5" fill="#1aa0f4" stroke="#101010" stroke-width="1.5"/><path d="M5 9A7 7 0 0 1 17 7M17 13A7 7 0 0 1 5 15" stroke="#111" stroke-width="1.6" fill="none"/><rect x="9" y="9" width="4" height="4" fill="#eee"/></svg></div><div class="op" style="left:792.6px;top:157.8px">Rotation</div><div class="abs" style="left:757.7px;top:177.2px"><svg width="23" height="23" viewBox="0 0 23 23"><rect x="0.75" y="0.75" width="21.5" height="21.5" fill="#1aa0f4" stroke="#101010" stroke-width="1.5"/><rect x="5" y="5" width="13" height="13" fill="none" stroke="#111" stroke-width="1.3"/><rect x="4" y="13" width="6" height="6" fill="#eee" stroke="#111"/><path d="M9 13L16 6M12 6H16V10" stroke="#eee" stroke-width="1.3" fill="none"/></svg></div><div class="op" style="left:792.6px;top:182.7px">Scale</div><div class="abs" style="left:757.7px;top:202.0px"><svg width="23" height="23" viewBox="0 0 23 23"><rect x="0.75" y="0.75" width="21.5" height="21.5" fill="#1aa0f4" stroke="#101010" stroke-width="1.5"/><circle cx="9" cy="15" r="5" fill="#e8c030" stroke="#111"/><path d="M12 19H20V13L17 8" stroke="#111" fill="#50d050"/></svg></div><div class="op" style="left:792.6px;top:207.5px">Slow</div></div><div class="abs" style="left:0;top:1016.5px;width:862.5px;height:24px;background:#f0f0f0;border-radius:0 0 0 7px"></div><div class="abs" style="left:23px;top:1024.5px;width:181px;height:9px;background:#8a8a8a"></div>
<div class="abs" style="left:1185px;top:39px;width:15px;height:1002px;background:#3c3c3c;border-right:1px solid #565656"></div>
</div>
</body></html>
